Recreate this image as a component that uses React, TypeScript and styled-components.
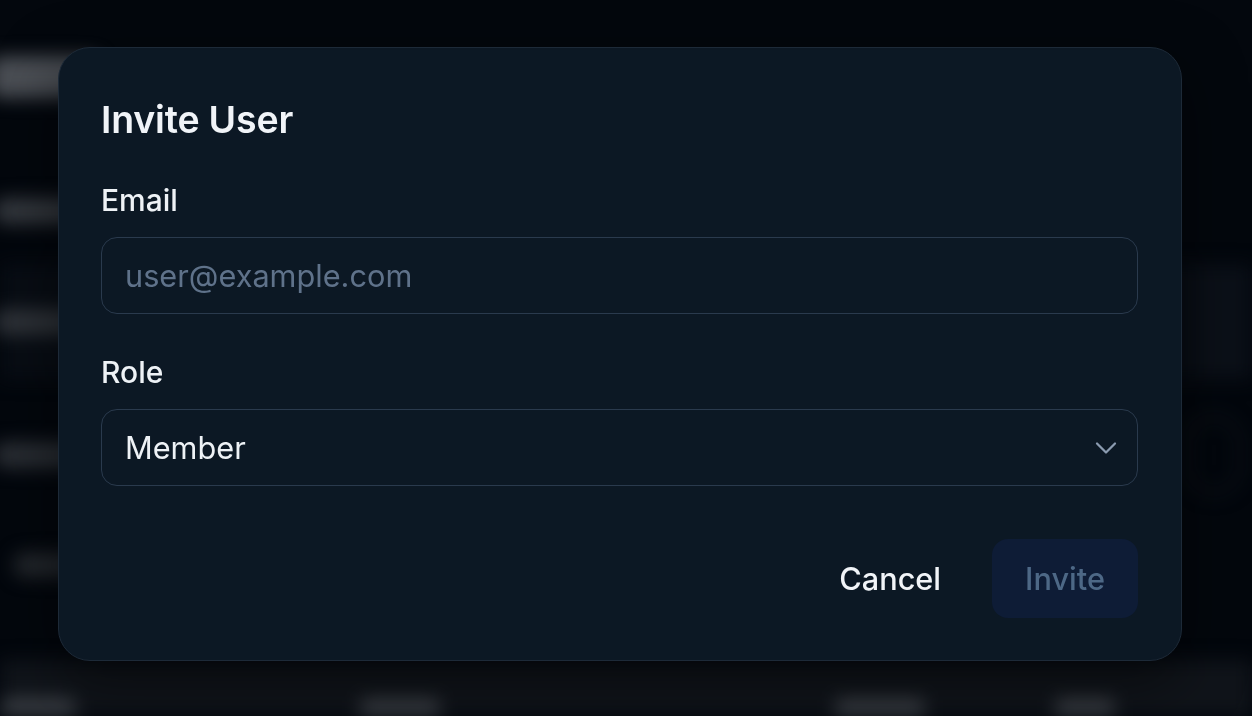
import React from "react";
import styled, { createGlobalStyle } from "styled-components";

const Global = createGlobalStyle`
  html, body { margin: 0; padding: 0; background: #03070d; }
  body { font-family: Inter, "Noto Sans", sans-serif; -webkit-font-smoothing: antialiased; }
  * { box-sizing: border-box; }
`;

const Page = styled.div`
  position: relative;
  width: 100vw;
  height: 100vh;
  overflow: hidden;
  background: #03070d;
`;

/* The page behind the dialog, blurred out of legibility */
const Behind = styled.div`
  display: flex;
  flex-direction: column;
  height: 100%;
  filter: blur(9px);
`;

const Bar = styled.div<{ $w: number; $h: number; $tone: string; $top?: number; $left?: number }>`
  width: ${(p) => p.$w}px;
  height: ${(p) => p.$h}px;
  margin-top: ${(p) => p.$top ?? 0}px;
  margin-left: ${(p) => p.$left ?? 0}px;
  background: ${(p) => p.$tone};
  border-radius: 10px;
  flex-shrink: 0;
`;

const BgCard = styled.div`
  margin-top: 40px;
  height: 116px;
  background: #080d14;
  display: flex;
  align-items: center;
  justify-content: space-between;
`;

const BgCardInner = styled.div`
  width: 56px;
  height: 110px;
  background: #0b1018;
`;

const BgRow = styled.div<{ $top: number }>`
  margin-top: ${(p) => p.$top}px;
  display: flex;
  align-items: center;
  justify-content: space-between;
  height: 30px;
`;

const BgCircle = styled.div`
  width: 56px;
  height: 80px;
  border-radius: 28px;
  border: 4px solid #10151c;
  margin-right: 10px;
`;

const BgTable = styled.div`
  margin-top: auto;
  height: 56px;
  background: #10141a;
  display: grid;
  grid-template-columns: 360px 475px 220px 1fr;
  align-items: end;
  overflow: hidden;
`;

const BgTh = styled.div<{ $w: number }>`
  width: ${(p) => p.$w}px;
  height: 26px;
  border-radius: 8px;
  background: #3a3e44;
  transform: translateY(8px);
`;

const Backdrop = styled.div`
  position: fixed;
  inset: 0;
  padding: 47px 70px 56px 58px;
  display: flex;
  align-items: flex-start;
`;

const Modal = styled.div`
  width: 1124px;
  background: #0c1824;
  border: 1px solid #1d2a38;
  border-radius: 32px;
  padding: 49px 43px 42px 42px;
  display: flex;
  flex-direction: column;
  color: #f1f4f8;
  box-shadow: 0 20px 60px rgba(0, 0, 0, 0.5);
`;

const Title = styled.h2`
  margin: 0;
  font-size: 37.5px;
  line-height: 46px;
  font-weight: 600;
  letter-spacing: -0.2px;
  color: #f1f4f8;
`;

const Field = styled.div<{ $top: number }>`
  display: flex;
  flex-direction: column;
  gap: 19px;
  margin-top: ${(p) => p.$top}px;
`;

const Label = styled.label`
  font-size: 30px;
  line-height: 36px;
  font-weight: 500;
  color: #eef2f6;
`;

const Input = styled.input`
  width: 100%;
  height: 77px;
  background: #0c1824;
  border: 1.5px solid #2a3a4d;
  border-radius: 16px;
  padding: 0 23px;
  font-family: inherit;
  font-size: 30.7px;
  color: #eef2f6;
  outline: none;
  &::placeholder { color: #5f728a; }
`;

const SelectBox = styled.div`
  width: 100%;
  height: 77px;
  border: 1.5px solid #2a3a4d;
  border-radius: 16px;
  padding: 0 13px 0 23px;
  display: flex;
  align-items: center;
  justify-content: space-between;
  font-size: 30.7px;
  color: #eef2f6;
`;

const Chevron = styled.svg`
  width: 36px;
  height: 36px;
  color: #8b9bb0;
`;

const Actions = styled.div`
  display: flex;
  justify-content: flex-end;
  gap: 18px;
  margin-top: 53px;
`;

const Button = styled.button<{ $primary?: boolean }>`
  height: 79px;
  padding: 0 33px;
  border-radius: 16px;
  border: none;
  font-family: inherit;
  font-size: 30.7px;
  font-weight: 500;
  background: ${(p) => (p.$primary ? "#0e1c36" : "transparent")};
  color: ${(p) => (p.$primary ? "#4d6886" : "#f1f4f8")};
`;

export default function App() {
  return (
    <>
      <Global />
      <Page>
        <Behind aria-hidden="true">
          <Bar $w={110} $h={42} $tone="#4a4e54" $top={56} $left={-10} />
          <Bar $w={180} $h={26} $tone="#34383e" $top={100} $left={-6} />
          <BgCard>
            <Bar $w={160} $h={26} $tone="#2e3238" $left={-6} />
            <BgCardInner />
          </BgCard>
          <BgRow $top={60}>
            <Bar $w={140} $h={26} $tone="#2a2e34" $left={-6} />
            <BgCircle />
          </BgRow>
          <BgRow $top={80}>
            <Bar $w={140} $h={24} $tone="#24282d" $left={14} />
          </BgRow>
          <BgTable>
            <BgTh $w={76} />
            <BgTh $w={80} />
            <BgTh $w={90} />
            <BgTh $w={60} />
          </BgTable>
        </Behind>
        <Backdrop>
          <Modal>
            <Title>Invite User</Title>
            <Field $top={39}>
              <Label>Email</Label>
              <Input placeholder="user@example.com" />
            </Field>
            <Field $top={40}>
              <Label>Role</Label>
              <SelectBox>
                <span>Member</span>
                <Chevron viewBox="0 0 24 24" fill="none" stroke="currentColor" strokeWidth="1.5" strokeLinecap="round" strokeLinejoin="round">
                  <path d="m6 9 6 6 6-6" />
                </Chevron>
              </SelectBox>
            </Field>
            <Actions>
              <Button>Cancel</Button>
              <Button $primary>Invite</Button>
            </Actions>
          </Modal>
        </Backdrop>
      </Page>
    </>
  );
}
